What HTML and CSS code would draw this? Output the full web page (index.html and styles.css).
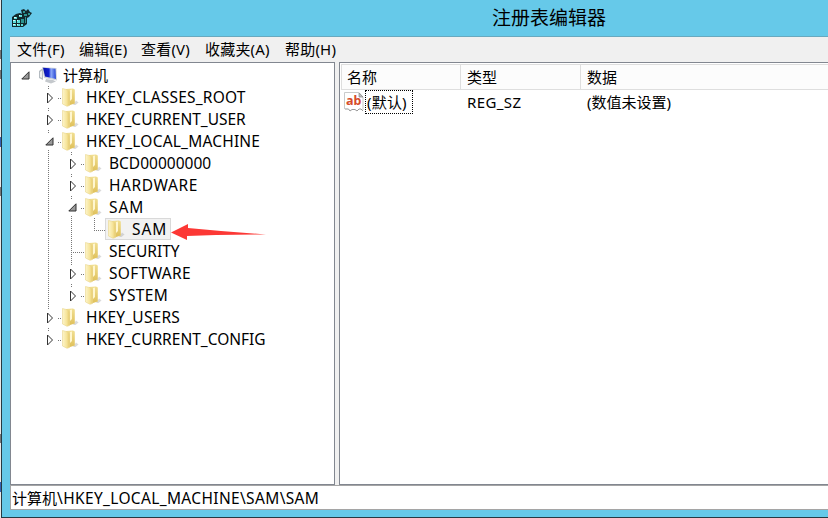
FILE: index.html
```html
<!DOCTYPE html>
<html lang="zh-CN">
<head>
<meta charset="utf-8">
<title>注册表编辑器</title>
<link rel="stylesheet" href="styles.css">
</head>
<body>
<svg class="defs" width="0" height="0">
  <defs>
    <linearGradient id="flap" x1="0" x2="1"><stop offset="0" stop-color="#fdf5cb"/><stop offset=".6" stop-color="#f6e49a"/><stop offset="1" stop-color="#e6ca6c"/></linearGradient>
    <linearGradient id="back" x1="0" x2="0" y2="1"><stop offset="0" stop-color="#f1df92"/><stop offset="1" stop-color="#dfc05a"/></linearGradient>
    <linearGradient id="screen" x1="0" x2="1"><stop offset="0" stop-color="#0712a8"/><stop offset=".45" stop-color="#1020d0"/><stop offset=".62" stop-color="#8eabf8"/><stop offset="1" stop-color="#2545d5"/></linearGradient>
    <symbol id="folder" viewBox="0 0 18 20">
      <path d="M12 18 L15 13.500 L17.500 15.500 L14.500 18Z" fill="#999" opacity=".35"/>
      <path d="M5 2 L12 1.500 L13.800 2.500 V16.500 L9 18 H5Z" fill="url(#back)"/>
      <path d="M9 3 L11 2.500 V12 L9 14Z" fill="#fff6cf"/>
      <path d="M1.500 1.500 L7 3 L8.500 5 V18.500 L6 19.300 L1.500 17Z" fill="url(#flap)" stroke="#e9d58c" stroke-width=".6"/>
    </symbol>
    <symbol id="closed" viewBox="0 0 8 12"><path d="M1.500 1 L6.500 6 L1.500 11Z" fill="#fff" stroke="#333" stroke-width="1"/></symbol>
    <symbol id="open" viewBox="0 0 9 9"><path d="M8 .8 V8 H.8Z" fill="#999" stroke="#303030" stroke-width="1"/></symbol>
  </defs>
</svg>
<div class="backdrop"><i class="b1"></i><i class="b2"></i><i class="b3"></i><i class="b4"></i><i class="b5"></i><i class="b6"></i></div>
<div class="window">
  <header class="titlebar">
    <svg class="app-icon" viewBox="0 0 22 20" width="22" height="20">
      <path d="M1 9 L5 6 L9 5 L11 6 L10 2 L13 1 L15 3 L17 1 L19 4 L21 5 L18 9 L16 10 V16 L12 19 H1Z" fill="#12292c"/>
      <path d="M3 9h3v2H3zM8 7h3v2H8zM2 12h3v3H2zM6 12h3v3H6zM2 16h3v2H2zM6 16h3v2H6zM10 16h2v2h-2z" fill="#5cdcd9"/>
      <path d="M10 11h3v4h-3zM14 9h1v6h-1zM12 3h2v2h-2zM17 5h2v2h-2zM13 6h3v2h-3z" fill="#2d9390"/>
      <path d="M3 9h2v1H3zM8 7h1v1H8zM2 12h2v1H2zM6 12h1v1H6zM6 16h1v1H6zM2 16h2v1H2z" fill="#d5ffff"/>
    </svg>
    <h1>注册表编辑器</h1>
  </header>
  <div class="client">
    <nav class="menu"><span class="m1">文件(F)</span><span class="m2">编辑(E)</span><span class="m3">查看(V)</span><span class="m4">收藏夹(A)</span><span class="m5">帮助(H)</span></nav>
    <main class="panes">
      <section class="tree">
        <div class="row root"><span class="cell root-cell"><svg class="open"><use href="#open"/></svg></span>
          <svg class="computer" viewBox="0 0 20 18" width="20" height="18"><path d="M1 5 L5 2 V14 L1 12Z" fill="#b3bac0"/><path d="M2 6 L4 4.500 V12 L2 11Z" fill="#eee"/><path d="M8 13 L15 14 L18 15.500 L13 17.500 L7 15.500Z" fill="#c4c8cc"/><path d="M4 1 L18.500 2 L19 14.500 L6 12Z" fill="#cfd4da"/><path d="M5 1.800 L17.500 2.800 L18 13 L7 10.500Z" fill="url(#screen)"/></svg><span class="label">计算机</span></div>
        <div class="row"><span class="cell blank"></span><span class="cell branch exp"><svg class="closed"><use href="#closed"/></svg></span><svg class="folder"><use href="#folder"/></svg><span class="label snug">HKEY_CLASSES_ROOT</span></div>
        <div class="row"><span class="cell blank"></span><span class="cell branch exp"><svg class="closed"><use href="#closed"/></svg></span><svg class="folder"><use href="#folder"/></svg><span class="label">HKEY_CURRENT_USER</span></div>
        <div class="row"><span class="cell blank"></span><span class="cell branch exp"><svg class="open"><use href="#open"/></svg></span><svg class="folder"><use href="#folder"/></svg><span class="label medium">HKEY_LOCAL_MACHINE</span></div>
        <div class="row"><span class="cell blank"></span><span class="cell line"></span><span class="cell branch exp"><svg class="closed"><use href="#closed"/></svg></span><svg class="folder"><use href="#folder"/></svg><span class="label">BCD00000000</span></div>
        <div class="row"><span class="cell blank"></span><span class="cell line"></span><span class="cell branch exp"><svg class="closed"><use href="#closed"/></svg></span><svg class="folder"><use href="#folder"/></svg><span class="label wide">HARDWARE</span></div>
        <div class="row"><span class="cell blank"></span><span class="cell line"></span><span class="cell branch exp"><svg class="open"><use href="#open"/></svg></span><svg class="folder"><use href="#folder"/></svg><span class="label widest">SAM</span></div>
        <div class="row"><span class="cell blank"></span><span class="cell line"></span><span class="cell line"></span><span class="cell branch elbow"></span><span class="selected"><svg class="folder"><use href="#folder"/></svg><span class="label widest">SAM</span></span>
          <svg class="arrow" width="96" height="18" viewBox="0 0 96 18"><path d="M0 8.500 L17 0 V4 L50 7 L95 10.500 L45 11 L16 12 V16Z" fill="#fc3835"/></svg></div>
        <div class="row"><span class="cell blank"></span><span class="cell line"></span><span class="cell branch tee"></span><svg class="folder"><use href="#folder"/></svg><span class="label">SECURITY</span></div>
        <div class="row"><span class="cell blank"></span><span class="cell line"></span><span class="cell branch exp"><svg class="closed"><use href="#closed"/></svg></span><svg class="folder"><use href="#folder"/></svg><span class="label loose">SOFTWARE</span></div>
        <div class="row"><span class="cell blank"></span><span class="cell line"></span><span class="cell branch exp last"><svg class="closed"><use href="#closed"/></svg></span><svg class="folder"><use href="#folder"/></svg><span class="label loose">SYSTEM</span></div>
        <div class="row"><span class="cell blank"></span><span class="cell branch exp"><svg class="closed"><use href="#closed"/></svg></span><svg class="folder"><use href="#folder"/></svg><span class="label snug">HKEY_USERS</span></div>
        <div class="row"><span class="cell blank"></span><span class="cell branch exp last"><svg class="closed"><use href="#closed"/></svg></span><svg class="folder"><use href="#folder"/></svg><span class="label">HKEY_CURRENT_CONFIG</span></div>
      </section>
      <section class="values">
        <div class="grid head"><span>名称</span><span>类型</span><span>数据</span></div>
        <div class="grid value"><span class="name"><svg class="string-icon" viewBox="0 0 20 20" width="20" height="20"><path d="M1 1H15L19 5V17L16 16L14 18L10 17L8 18.500L5 16L3 17.500L1 16Z" fill="#fff"/><path d="M.5 17V.5H15L19 5V18" fill="none" stroke="#c9cbcb"/><path d="M15 1V5H19Z" fill="#bbb" stroke="#888" stroke-width=".7"/><path d="M1 17H4.500L6 19L8 17.500H11L13 19L15 17H17L19 19" fill="none" stroke="#999"/><text x="2" y="12.500">ab</text></svg><span class="focus">(默认)</span></span><span class="type">REG_SZ</span><span class="data">(数值未设置)</span></div>
      </section>
    </main>
    <footer class="status">计算机<span class="path">\HKEY_LOCAL_MACHINE\SAM\SAM</span></footer>
  </div>
</div>
</body>
</html>
```
FILE: styles.css
```css
* { box-sizing: border-box; }
body { margin: 0; width: 828px; height: 518px; overflow: hidden; display: flex; background: #fff; color: #000; font: 15px/22px "Noto Sans", "Noto Sans CJK SC", sans-serif; }
.defs { position: absolute; }
.backdrop { width: 1px; height: 518px; background: #e9e9e9; flex: none; display: flex; flex-direction: column; }
.backdrop i { width: 1px; height: 9px; background: #777; flex: none; }
.b1 { margin-top: 50px; }
.b2 { margin-top: 11px; }
.b3 { margin-top: 58px; }
.backdrop .b3, .backdrop .b6 { background: #3662b4; height: 10px; }
.b4 { margin-top: 40px; }
.b5 { margin-top: 238px; }
.b6 { margin-top: 39px; }
.window { flex: 1; height: 518px; min-width: 0; border-left: 1px solid #263a43; border-bottom: 1px solid #263a43; background: #66c9e9; padding: 0 0 7px 8px; display: flex; flex-direction: column; }
.titlebar { height: 37px; flex: none; display: flex; align-items: flex-start; border-bottom: 1px solid #68a9bf; }
.app-icon { margin: 8px 0 0 1px; flex: none; }
h1 { font-size: 19px; font-weight: 400; line-height: 36px; margin: 0 0 0 459px; white-space: nowrap; }
.client { flex: 1; background: #f0f0f0; display: flex; flex-direction: column; min-height: 0; }
.menu { height: 25px; display: flex; padding-left: 7px; line-height: 25px; letter-spacing: .2px; white-space: nowrap; flex: none; }
.m1, .m2 { width: 62px; }
.m3 { width: 64px; }
.m4 { width: 80px; }
.panes { height: 423px; display: flex; flex: none; gap: 4px; }
.tree { width: 325px; background: #fff; border: 1px solid #828790; padding: 1px 0 0 4px; }
.row { height: 22px; display: flex; align-items: center; white-space: nowrap; }
.row .label { font-size: 15.5px; }
.root .label { font-size: 15px; }
.row .snug { letter-spacing: .2px; }
.row .medium { letter-spacing: .2px; }
.row .loose { letter-spacing: .35px; }
.row .wide { letter-spacing: .6px; }
.row .widest { letter-spacing: .9px; }
.cell { width: 23px; height: 22px; flex: none; display: flex; align-items: center; padding-left: 7px; }
.root-cell { padding-left: 6px; }
.line { background: repeating-linear-gradient(#777 0 1px, transparent 1px 2px) 10px 0 / 1px 22px no-repeat; }
.branch { background: repeating-linear-gradient(#777 0 1px, transparent 1px 2px) 10px 0 / 1px 22px no-repeat, repeating-linear-gradient(90deg, #777 0 1px, transparent 1px 2px) 10px 12px / 13px 1px no-repeat; }
.exp { background-size: 1px 22px, 4px 1px; background-position: 10px 0, 20px 12px; }
.exp.last { background-size: 1px 11px, 4px 1px; }
.elbow { background-size: 1px 12px, 13px 1px; }
.closed { width: 8px; height: 12px; margin: 2px 0 0 1px; background: #fff; box-shadow: 0 0 0 3px #fff; }
.open { width: 9px; height: 9px; flex: none; margin-top: 1px; }
.exp .open { background: #fff; box-shadow: 0 0 0 3px #fff; }
.computer { width: 20px; height: 18px; flex: none; margin: 0 5px 0 0; }
.folder { width: 18px; height: 20px; flex: none; margin-right: 7px; }
.selected { height: 22px; display: flex; align-items: center; background: #f2f2f2; outline: 1px solid #d9d9d9; outline-offset: -1px; margin-left: -2px; padding: 0 3px 0 2px; width: 66px; }
.arrow { margin-left: 0; position: relative; top: 4px; }
.values { flex: 1; background: #fff; border: 1px solid #828790; border-right: 0; padding: 1px 0 0 1px; }
.grid { display: grid; grid-template-columns: 120px 120px 1fr; }
.head { grid-template-columns: 119px 120px 1fr; height: 26px; line-height: 25px; border: 1px solid #dedede; border-width: 1px 0 1px 1px; background: #fcfcfc; }
.head span { padding-left: 6px; border-right: 1px solid #dedede; }
.head span:first-child { padding-left: 5px; }
.head span:last-child { border-right: 0; }
.value { height: 25px; line-height: 24px; white-space: nowrap; }
.name { display: flex; }
.string-icon { flex: none; margin: 2px 0 0 3px; }
.string-icon text { font: bold 12.500px "Noto Sans", sans-serif; fill: #d64b2b; }
.focus { height: 24px; width: 48px; border: 1px dotted #000; padding-left: 1px; line-height: 22px; margin-left: 1px; letter-spacing: .2px; }
.type, .data { padding-left: 6px; }
.type { letter-spacing: .4px; }
.status { height: 25px; background: #fff; border: 1px solid #a5a5a5; border-width: 1px 0 1px 1px; padding-left: 1px; line-height: 25px; white-space: nowrap; }
.path { font-size: 15.5px; letter-spacing: .35px; }
```
